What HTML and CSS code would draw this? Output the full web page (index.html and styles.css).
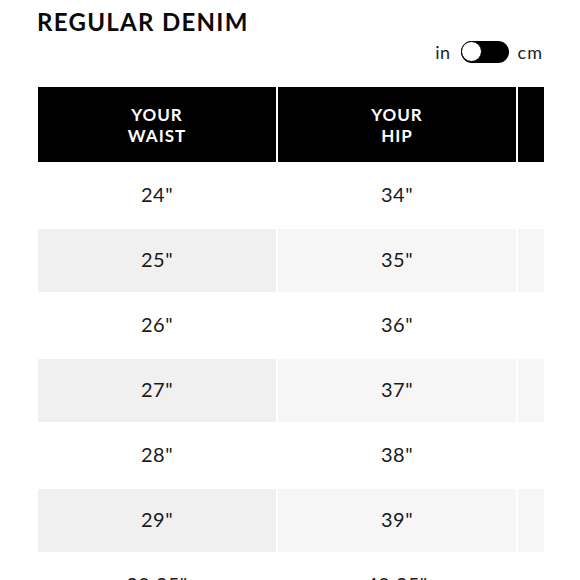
FILE: index.html
```html
<!DOCTYPE html>
<html>
<head>
<meta charset="utf-8">
<link rel="stylesheet" href="styles.css">
</head>
<body>
<div class="page">
  <h1 class="title">REGULAR DENIM</h1>
  <div class="units">
    <span class="unit">in</span>
    <span class="toggle"><span class="knob"></span></span>
    <span class="unit unit-cm">cm</span>
  </div>
  <div class="table-wrap">
    <table class="chart">
      <thead>
        <tr>
          <th>YOUR<br>WAIST</th>
          <th>YOUR<br>HIP</th>
          <th></th>
        </tr>
      </thead>
      <tbody>
        <tr><td>24"</td><td>34"</td><td></td></tr>
        <tr><td>25"</td><td>35"</td><td></td></tr>
        <tr><td>26"</td><td>36"</td><td></td></tr>
        <tr><td>27"</td><td>37"</td><td></td></tr>
        <tr><td>28"</td><td>38"</td><td></td></tr>
        <tr><td>29"</td><td>39"</td><td></td></tr>
        <tr><td>30.25"</td><td>40.25"</td><td></td></tr>
      </tbody>
    </table>
  </div>
</div>
</body>
</html>
```
FILE: styles.css
```css
html, body {
  margin: 0;
  padding: 0;
  background: #fff;
}
.page {
  font-family: Lato, "Open Sans", sans-serif;
  color: #111;
  padding: 9px 0 0 36px;
  width: 508px;
}
.title {
  margin: 0 0 0 1px;
  font-size: 24px;
  line-height: 26px;
  font-weight: 700;
  letter-spacing: 1.3px;
  color: #0a0a0a;
}
.units {
  display: flex;
  justify-content: flex-end;
  align-items: center;
  gap: 10px;
  margin-top: 6px;
  padding-right: 1px;
  height: 22px;
}
.unit {
  font-size: 18px;
  line-height: 22px;
  color: #222;
  letter-spacing: 0.5px;
}
.unit-cm {
  margin-left: -1px;
  letter-spacing: 1px;
}
.toggle {
  position: relative;
  display: block;
  width: 48px;
  height: 22px;
  border-radius: 11px;
  background: #000;
}
.knob {
  position: absolute;
  left: 0;
  top: 0;
  width: 19px;
  height: 19px;
  border-radius: 50%;
  background: #fff;
  border: 1.5px solid #000;
}
.table-wrap {
  margin-top: 22px;
  width: 508px;
  overflow: hidden;
}
.chart {
  border-collapse: separate;
  border-spacing: 2px;
  table-layout: fixed;
  width: 722px;
}
.chart th {
  background: #000;
  color: #fff;
  height: 75px;
  padding: 0;
  font-size: 17px;
  line-height: 21px;
  font-weight: 700;
  letter-spacing: 1px;
  text-align: center;
  vertical-align: middle;
}
.chart td {
  height: 60px;
  padding: 0 0 3px;
  font-size: 20px;
  text-align: center;
  vertical-align: middle;
  color: #1a1a1a;
  letter-spacing: 0.5px;
}
.chart tbody tr:nth-child(even) td {
  background: #f6f6f6;
}
.chart tbody tr:nth-child(even) td:first-child {
  background: #f0f0f0;
}
```
